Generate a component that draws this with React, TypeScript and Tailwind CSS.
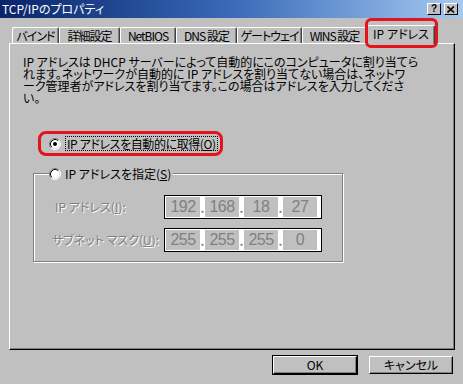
import { Fragment } from 'react';

const TABS = [
    { label: 'バインド', w: 'w-[47px]' },
    { label: '詳細設定', w: 'w-[61px]' },
    { label: 'NetBIOS', w: 'w-[56px]' },
    { label: 'DNS 設定', w: 'w-[61px]' },
    { label: 'ゲートウェイ', w: 'w-[65px]' },
    { label: 'WINS 設定', w: 'w-[65px]' },
];

const Radio = ({ checked }: { checked?: boolean }) => (
    <svg width="12" height="12" viewBox="0 0 12 12" className="shrink-0">
        <circle cx="6" cy="6" r="5" fill="#fff" />
        <path d="M2.11 9.89 A5.5 5.5 0 0 1 9.89 2.11" fill="none" stroke="#808080" />
        <path d="M2.82 9.18 A4.5 4.5 0 0 1 9.18 2.82" fill="none" stroke="#000" />
        <path d="M2.11 9.89 A5.5 5.5 0 0 0 9.89 2.11" fill="none" stroke="#fff" />
        <path d="M2.82 9.18 A4.5 4.5 0 0 0 9.18 2.82" fill="none" stroke="#dfdfdf" />
        {checked && <circle cx="6" cy="6" r="2" fill="#000" />}
    </svg>
);

const IpBox = ({ parts }: { parts: string[] }) => (
    <div className="flex h-[24px] w-[158px] border border-black bg-white p-[1px]">
        {parts.map((p, i) => (
            <Fragment key={i}>
                {i > 0 && (
                    <span className="flex w-[5px] items-end justify-center pb-[3px] text-[12px] leading-none font-bold text-[#808080]">
                        .
                    </span>
                )}
                <span className="flex w-[34px] items-center justify-center bg-[#c0c0c0] font-['Liberation_Sans',sans-serif] text-[16px] leading-none tracking-[-0.5px] text-[#808080]">
                    {p}
                </span>
            </Fragment>
        ))}
    </div>
);

const Button = ({ label, def }: { label: string; def?: boolean }) => (
    <div className={def ? 'border border-black' : 'border border-transparent'}>
        <div className="flex h-[18px] w-[84px] items-center justify-center border border-t-white border-l-white border-r-black border-b-black bg-[#c0c0c0] text-[12px] shadow-[inset_-1px_-1px_0_#808080]">
            {label}
        </div>
    </div>
);

export default function App() {
    return (
        <div className="h-[384px] w-[463px] overflow-hidden bg-[#c0c0c0] font-['Noto_Sans_CJK_JP',sans-serif] text-black [font-feature-settings:'palt']">
            {/* Title bar */}
            <div className="flex h-[18px] items-center bg-gradient-to-r from-[#0a246a] via-[#3a6ab8] to-[#a6caf0] pr-[5px] pl-[2px]">
                <span className="text-[12px] leading-none text-white">
                    TCP/IPのプロパティ
                </span>
                <div className="ml-auto flex gap-[3px]">
                    <div className="flex h-[12px] w-[14px] items-center justify-center border border-t-white border-l-white border-r-black border-b-black bg-[#c0c0c0] font-['Liberation_Sans',sans-serif] text-[10px] leading-none font-bold">
                        ?
                    </div>
                    <div className="flex h-[12px] w-[14px] items-center justify-center border border-t-white border-l-white border-r-black border-b-black bg-[#c0c0c0]">
                        <svg width="8" height="7" viewBox="0 0 8 7">
                            <path d="M0.5 0.5 L7 6.5 M7 0.5 L0.5 6.5" stroke="#000" strokeWidth="1.6" />
                        </svg>
                    </div>
                </div>
            </div>

            <div className="pr-[8px] pl-[9px]">
                {/* Tabs */}
                <div className="flex h-[25px] items-end pl-[3px]">
                    {TABS.map((t) => (
                        <div
                            key={t.label}
                            className={`${t.w} flex h-[16px] shrink-0 items-center justify-center rounded-t-[2px] border-t border-r border-l border-t-white border-r-[#404040] border-l-white text-[12px] leading-none tracking-[-1px] whitespace-nowrap shadow-[inset_-1px_0_0_#808080]`}
                        >
                            {t.label}
                        </div>
                    ))}
                    <div className="relative z-10 -mb-px flex h-[19px] w-[68px] shrink-0 items-start justify-center rounded-t-[2px] border-t border-r border-l border-t-white border-r-[#404040] border-l-white bg-[#c0c0c0] pt-[2px] text-[12px] leading-none whitespace-nowrap shadow-[inset_-1px_0_0_#808080]">
                        IP アドレス
                        <div className="pointer-events-none absolute -top-[8px] -right-[4px] -bottom-[4px] -left-[3px] rounded-[6px] border-[3px] border-[#e4141e]" />
                    </div>
                </div>

                {/* Panel */}
                <div className="h-[307px] border border-t-white border-r-black border-b-black border-l-white pt-[12px] shadow-[inset_-1px_-1px_0_#808080]">
                    <p className="pl-[13px] text-[12px] leading-[12px] whitespace-nowrap">
                        IP アドレスは DHCP サーバーによって自動的にこのコンピュータに割り当てら
                        <br />
                        れます。ネットワークが自動的に IP アドレスを割り当てない場合は、ネットワ
                        <br />
                        ーク管理者がアドレスを割り当てます。この場合はアドレスを入力してくださ
                        <br />
                        い。
                    </p>

                    <div className="mt-[27px] ml-[28px] flex h-[25px] w-[185px] items-center gap-[4px] rounded-[8px] border-[3px] border-[#e4141e] pl-[8px]">
                        <Radio checked />
                        <span className="border border-dotted border-black px-[1px] text-[12px] leading-[13px] tracking-[-0.4px] whitespace-nowrap">
                            IP アドレスを自動的に取得(<span className="underline">O</span>)
                        </span>
                    </div>

                    <fieldset className="mt-[11px] ml-[23px] h-[95px] w-[310px] border border-[#808080] shadow-[inset_1px_1px_0_#fff,1px_1px_0_#fff]">
                        <legend className="ml-[15px] flex items-center gap-[4px] bg-[#c0c0c0] pr-[2px] text-[12px] leading-[13px] whitespace-nowrap">
                            <Radio />
                            <span>
                                IP アドレスを指定(<span className="underline">S</span>)
                            </span>
                        </legend>
                        <div className="flex flex-col gap-[9px] pt-[15px]">
                            <div className="flex items-center">
                                <span className="w-[130px] pl-[21px] text-[12px] whitespace-nowrap text-[#808080] [text-shadow:1px_1px_0_#fff]">
                                    IP アドレス(<span className="underline">I</span>):
                                </span>
                                <IpBox parts={['192', '168', '18', '27']} />
                            </div>
                            <div className="flex items-center">
                                <span className="w-[130px] pl-[18px] text-[12px] whitespace-nowrap text-[#808080] [text-shadow:1px_1px_0_#fff]">
                                    サブネット マスク(<span className="underline">U</span>):
                                </span>
                                <IpBox parts={['255', '255', '255', '0']} />
                            </div>
                        </div>
                    </fieldset>
                </div>

                {/* Buttons */}
                <div className="mt-[5px] flex justify-end gap-[10px] pr-[1px]">
                    <Button label="OK" def />
                    <Button label="キャンセル" />
                </div>
            </div>
        </div>
    );
}
